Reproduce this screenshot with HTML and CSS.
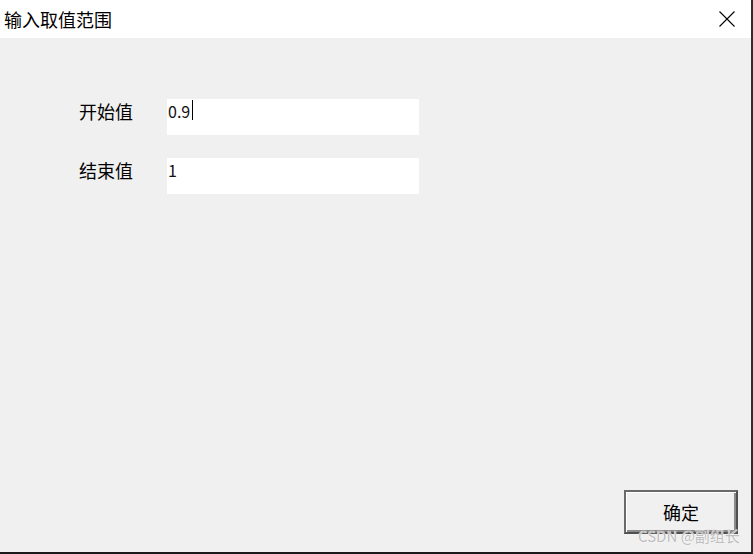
FILE: index.html
```html
<!DOCTYPE html>
<html lang="zh-CN">
<head>
<meta charset="utf-8">
<title>输入取值范围</title>
<link rel="stylesheet" href="styles.css">
</head>
<body>
<div class="window">
  <div class="titlebar">
    <span class="title">输入取值范围</span>
    <svg class="close" width="16" height="16" viewBox="0 0 16 16">
      <path d="M0.5 0.5 L15.5 15.5 M15.5 0.5 L0.5 15.5" stroke="#000" stroke-width="1.1" fill="none"/>
    </svg>
  </div>
  <div class="content">
    <div class="form">
      <div class="row">
        <span class="label">开始值</span>
        <div class="field"><span class="value">0.9</span><span class="caret"></span></div>
      </div>
      <div class="row">
        <span class="label">结束值</span>
        <div class="field"><span class="value">1</span></div>
      </div>
    </div>
    <div class="footer">
      <button class="btn">确定</button>
    </div>
  </div>
  <div class="watermark">CSDN @副组长</div>
</div>
</body>
</html>
```

FILE: styles.css
```css
html, body {
  margin: 0;
  padding: 0;
  width: 753px;
  height: 554px;
  overflow: hidden;
  background: #f0f0f0;
}
.window {
  position: relative;
  box-sizing: border-box;
  width: 753px;
  height: 554px;
  display: flex;
  flex-direction: column;
  border-right: 2px solid #2e2e2e;
  border-bottom: 2px solid #1a1a1a;
  font-family: "Noto Sans CJK SC", "Noto Sans", sans-serif;
  color: #000;
}
.titlebar {
  height: 38px;
  flex: none;
  background: #fff;
  display: flex;
  align-items: center;
  justify-content: space-between;
  padding-left: 4px;
}
.title {
  font-size: 18px;
  line-height: 24px;
  margin-top: -1px;
}
.close {
  margin-right: 16px;
  margin-top: -1px;
}
.content {
  flex: 1;
  display: flex;
  flex-direction: column;
  background: #f0f0f0;
  padding: 61px 13px 18px 79px;
}
.form {
  display: flex;
  flex-direction: column;
  gap: 23px;
}
.row {
  display: flex;
  align-items: flex-start;
}
.label {
  width: 88px;
  font-size: 18px;
  line-height: 20px;
  margin-top: 2px;
}
.field {
  width: 252px;
  height: 36px;
  background: #fff;
  display: flex;
  align-items: flex-start;
  padding-left: 1px;
  box-sizing: border-box;
}
.value {
  font-family: "Noto Sans CJK SC", "Noto Sans", sans-serif;
  font-size: 16px;
  line-height: 20px;
  margin-top: 2px;
  color: #111;
}
.caret {
  width: 1px;
  height: 20px;
  background: #000;
  margin-left: 2px;
  margin-top: 1px;
}
.footer {
  margin-top: auto;
  display: flex;
  justify-content: flex-end;
}
.btn {
  width: 114px;
  height: 44px;
  box-sizing: border-box;
  background: #f0f0f0;
  border: 2px solid #6a6a6a;
  border-right-color: #505050;
  border-bottom-color: #505050;
  box-shadow: inset 1px 1px 0 #ffffff, inset -2px -2px 0 #8a8a8a;
  font-family: "Noto Sans CJK SC", sans-serif;
  font-size: 18px;
  color: #000;
  padding: 0;
}
.watermark {
  position: absolute;
  left: 638px;
  top: 527px;
  font-family: "Noto Sans CJK SC", sans-serif;
  font-size: 15px;
  line-height: 18px;
  color: #bdbdbd;
  text-shadow: 0 0 1px #fff, 0 0 1px #fff;
}
```
